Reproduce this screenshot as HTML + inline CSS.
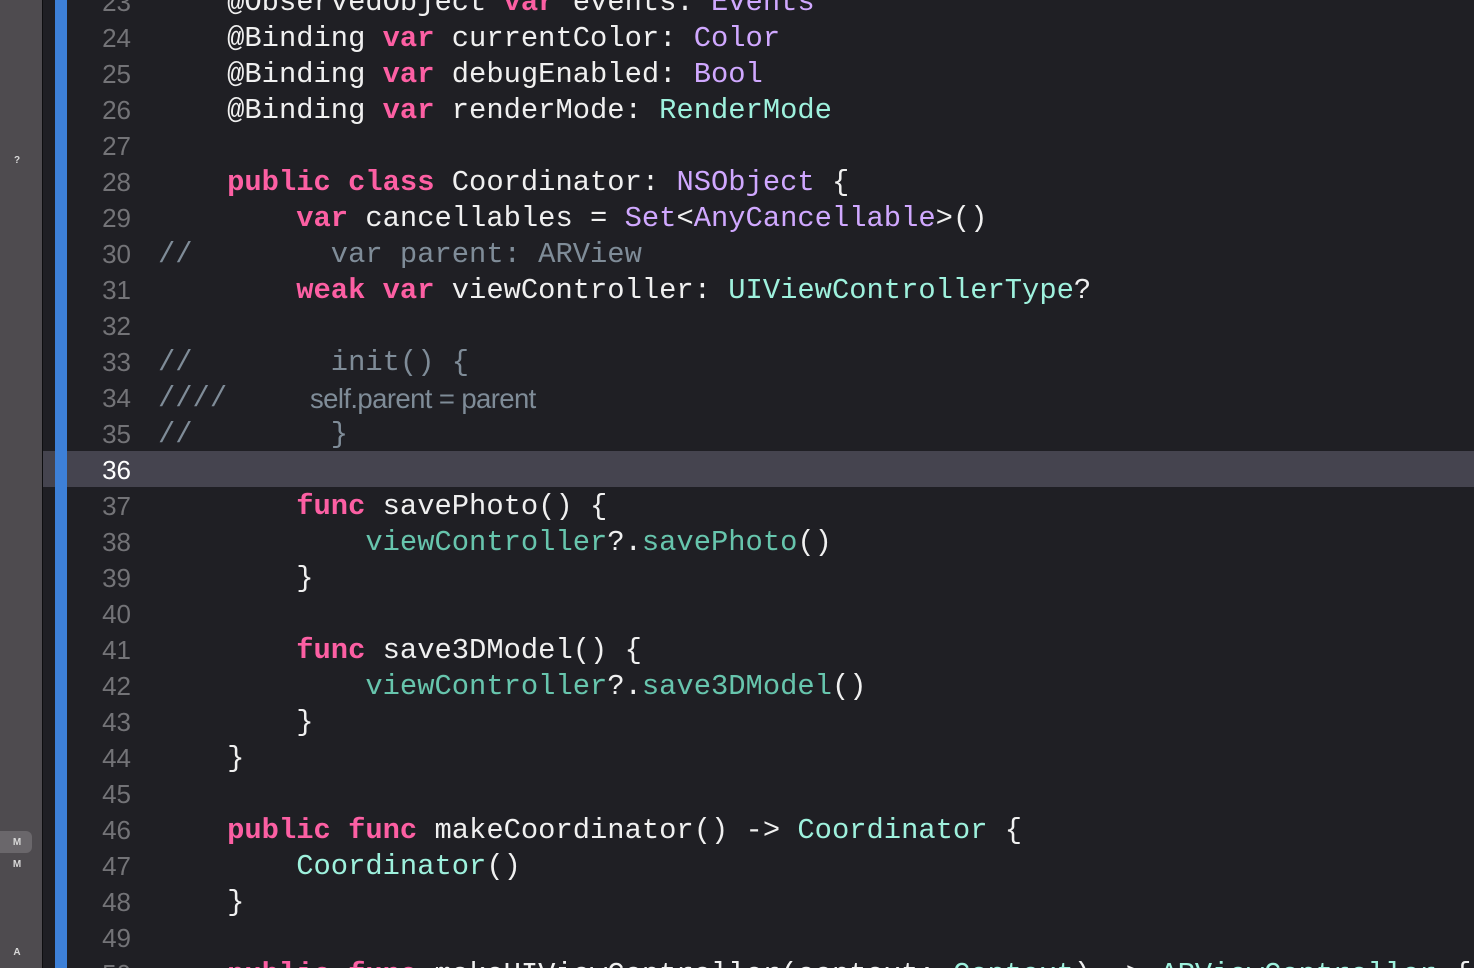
<!DOCTYPE html>
<html><head><meta charset="utf-8"><style>
html,body{margin:0;padding:0;width:1474px;height:968px;overflow:hidden;background:#1f1f24;}
#w{position:relative;width:1474px;height:968px;overflow:hidden;background:#1f1f24;}
.sb{position:absolute;left:0;top:0;width:42px;height:968px;background:#4e4b4f;}
.sbl{position:absolute;left:42px;top:0;width:1px;height:968px;background:#0e0e10;}
.blue{position:absolute;left:55px;top:0;width:12px;height:968px;background:#3d80d8;}
.hl{position:absolute;left:43px;top:451px;width:1431px;height:36px;background:#45444f;}
.sbt{position:absolute;font:bold 10px "Liberation Sans",sans-serif;color:#d8d8d8;width:34px;text-align:center;left:0;}
.mbox{position:absolute;left:0;top:831px;width:32px;height:22px;background:#6a676b;border-radius:0 6px 6px 0;}
.ln{position:absolute;left:70px;width:61px;text-align:right;font:26px "Liberation Sans",sans-serif;color:#737377;height:36px;line-height:36px;margin-top:0px;}
.c{position:absolute;left:158px;font:28.8px "Liberation Mono",monospace;color:#f0f0f0;white-space:pre;height:36px;line-height:36px;margin-top:1px;}
.k{color:#fc5fa3;font-weight:bold}
.t{color:#d0a8ff}
.g{color:#9ef1dd}
.f{color:#67c5ad}
.cm{color:#7f8c98}
.p{font-family:"Liberation Sans",sans-serif;font-size:27.5px;letter-spacing:-0.6px;}
</style></head><body><div id="w">
<div class="sb"></div><div class="sbl"></div>
<div class="mbox"></div>
<div class="sbt" style="top:155px">?</div>
<div class="sbt" style="top:837px">M</div>
<div class="sbt" style="top:859px">M</div>
<div class="sbt" style="top:947px">A</div>
<div class="hl"></div>
<div class="blue"></div>

<div class="ln" style="top:-16px">23</div>
<div class="ln" style="top:20px">24</div>
<div class="ln" style="top:56px">25</div>
<div class="ln" style="top:92px">26</div>
<div class="ln" style="top:128px">27</div>
<div class="ln" style="top:164px">28</div>
<div class="ln" style="top:200px">29</div>
<div class="ln" style="top:236px">30</div>
<div class="ln" style="top:272px">31</div>
<div class="ln" style="top:308px">32</div>
<div class="ln" style="top:344px">33</div>
<div class="ln" style="top:380px">34</div>
<div class="ln" style="top:416px">35</div>
<div class="ln" style="top:452px;color:#fff">36</div>
<div class="ln" style="top:488px">37</div>
<div class="ln" style="top:524px">38</div>
<div class="ln" style="top:560px">39</div>
<div class="ln" style="top:596px">40</div>
<div class="ln" style="top:632px">41</div>
<div class="ln" style="top:668px">42</div>
<div class="ln" style="top:704px">43</div>
<div class="ln" style="top:740px">44</div>
<div class="ln" style="top:776px">45</div>
<div class="ln" style="top:812px">46</div>
<div class="ln" style="top:848px">47</div>
<div class="ln" style="top:884px">48</div>
<div class="ln" style="top:920px">49</div>
<div class="ln" style="top:956px">50</div>

<div class="c" style="top:-16px">    @ObservedObject <span class="k">var</span> events: <span class="t">Events</span></div>
<div class="c" style="top:20px">    @Binding <span class="k">var</span> currentColor: <span class="t">Color</span></div>
<div class="c" style="top:56px">    @Binding <span class="k">var</span> debugEnabled: <span class="t">Bool</span></div>
<div class="c" style="top:92px">    @Binding <span class="k">var</span> renderMode: <span class="g">RenderMode</span></div>
<div class="c" style="top:164px">    <span class="k">public class</span> Coordinator: <span class="t">NSObject</span> {</div>
<div class="c" style="top:200px">        <span class="k">var</span> cancellables = <span class="t">Set</span>&lt;<span class="t">AnyCancellable</span>&gt;()</div>
<div class="c cm" style="top:236px">//        var parent: ARView</div>
<div class="c" style="top:272px">        <span class="k">weak var</span> viewController: <span class="g">UIViewControllerType</span>?</div>
<div class="c cm" style="top:344px">//        init() {</div>
<div class="c cm" style="top:380px">////</div>
<div class="c cm p" style="top:380px;left:310px">self.parent = parent</div>
<div class="c cm" style="top:416px">//        }</div>
<div class="c" style="top:488px">        <span class="k">func</span> savePhoto() {</div>
<div class="c" style="top:524px">            <span class="f">viewController</span>?.<span class="f">savePhoto</span>()</div>
<div class="c" style="top:560px">        }</div>
<div class="c" style="top:632px">        <span class="k">func</span> save3DModel() {</div>
<div class="c" style="top:668px">            <span class="f">viewController</span>?.<span class="f">save3DModel</span>()</div>
<div class="c" style="top:704px">        }</div>
<div class="c" style="top:740px">    }</div>
<div class="c" style="top:812px">    <span class="k">public func</span> makeCoordinator() -&gt; <span class="g">Coordinator</span> {</div>
<div class="c" style="top:848px">        <span class="g">Coordinator</span>()</div>
<div class="c" style="top:884px">    }</div>
<div class="c" style="top:956px">    <span class="k">public func</span> makeUIViewController(context: <span class="g">Context</span>) -&gt; <span class="g">ARViewController</span> {</div>
</div></body></html>
